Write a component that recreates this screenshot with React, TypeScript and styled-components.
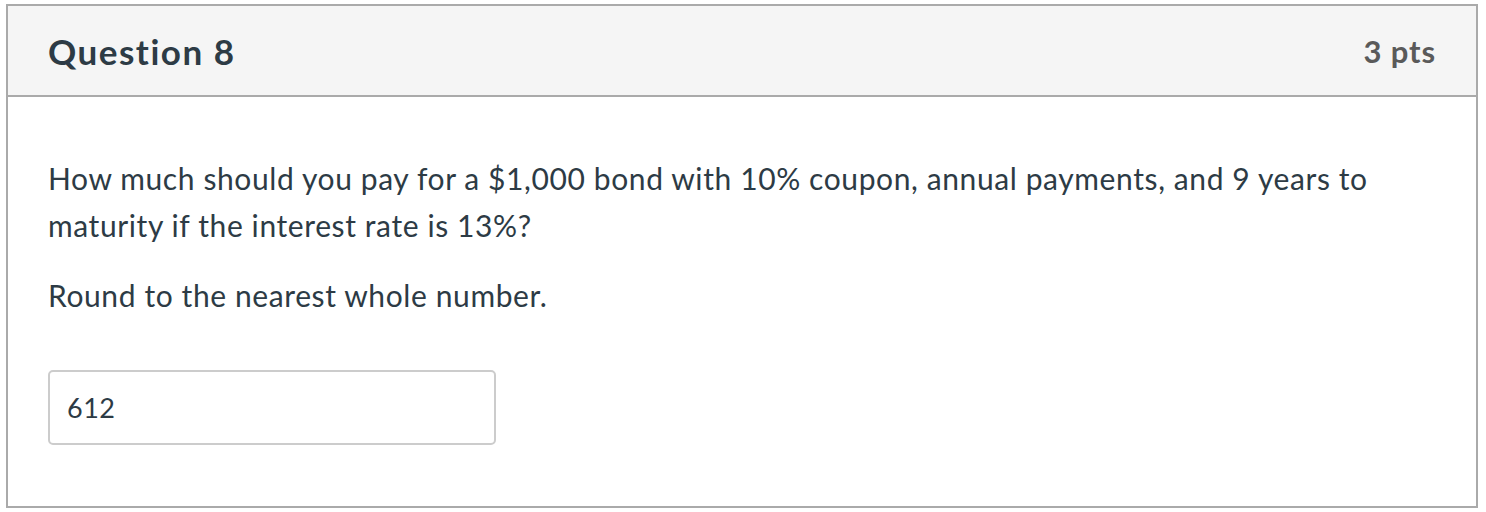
import React from "react";
import styled, { createGlobalStyle } from "styled-components";

const Global = createGlobalStyle`
  html, body { margin: 0; padding: 0; background: #fff; }
  body { font-family: Lato, "Open Sans", sans-serif; font-variant-ligatures: none; }
  * { box-sizing: border-box; }
`;

const Page = styled.div`
  padding: 4px 8px 4px 6px;
`;

const Card = styled.div`
  border: 2px solid #aaaaaa;
  width: 1472px;
  height: 504px;
  display: flex;
  flex-direction: column;
`;

const Header = styled.div`
  background: #f5f5f5;
  border-bottom: 2px solid #aaaaaa;
  height: 91px;
  display: flex;
  align-items: center;
  justify-content: space-between;
  padding: 0 40px 0 40px;
`;

const Title = styled.h2`
  margin: 0;
  font-family: Lato, sans-serif;
  font-weight: 700;
  font-size: 35px;
  letter-spacing: 1.5px;
  color: #2d3b45;
  font-variant-ligatures: none;
`;

const Points = styled.span`
  font-family: Lato, sans-serif;
  font-weight: 700;
  font-size: 31px;
  letter-spacing: 0.9px;
  color: #5a5a5a;
`;

const Body = styled.div`
  padding: 58px 40px 0 40px;
  color: #2d3b45;
  font-size: 30px;
  letter-spacing: 0.6px;
  line-height: 47px;
`;

const Para = styled.p`
  margin: 0 0 23px 0;
`;

const Input = styled.input`
  display: block;
  margin-top: 51px;
  width: 448px;
  height: 75px;
  border: 2px solid #cccccc;
  border-radius: 5px;
  padding: 0 17px;
  font-family: Lato, sans-serif;
  font-size: 27px;
  letter-spacing: 0.5px;
  color: #2d3b45;
  background: #fff;
  outline: none;
`;

export default function App() {
  return (
    <>
      <Global />
      <Page>
        <Card>
          <Header>
            <Title>Question 8</Title>
            <Points>3 pts</Points>
          </Header>
          <Body>
            <Para>
              How much should you pay for a $1,000 bond with 10% coupon, annual payments, and 9 years to maturity if the interest rate is 13%?
            </Para>
            <Para>Round to the nearest whole number.</Para>
            <Input defaultValue="612" readOnly />
          </Body>
        </Card>
      </Page>
    </>
  );
}
